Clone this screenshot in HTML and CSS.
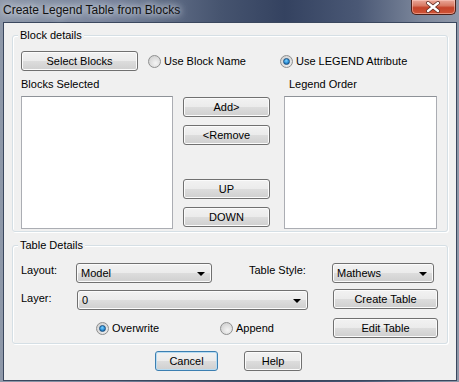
FILE: index.html
```html
<!DOCTYPE html>
<html lang="en">
<head>
    <meta charset="UTF-8">
    <title>Create Legend Table from Blocks</title>
    <link rel="stylesheet" href="styles.css">
</head>
<body>
<div class="window">
    <div class="titlebar">
        <span class="title">Create Legend Table from Blocks</span>
        <span class="close">
            <svg width="43" height="14" viewBox="0 0 43 14">
                <path d="M16 3 L26 11 M26 3 L16 11" stroke="#5a2a22" stroke-width="4" stroke-linecap="round"/>
                <path d="M16 3 L26 11 M26 3 L16 11" stroke="#ffffff" stroke-width="2.4" stroke-linecap="round"/>
            </svg>
        </span>
    </div>
    <div class="client">
        <div class="group group-blocks">
            <span class="group-title">Block details</span>
            <div class="row row-select">
                <button class="btn btn-select">Select Blocks</button>
                <label class="radio radio-name"><span class="dot"></span>Use Block Name</label>
                <label class="radio"><span class="dot checked"></span>Use LEGEND Attribute</label>
            </div>
            <div class="row row-captions">
                <span class="caption-left">Blocks Selected</span>
                <span>Legend Order</span>
            </div>
            <div class="row row-lists">
                <div class="listbox list-left"></div>
                <div class="list-buttons">
                    <button class="btn">Add&gt;</button>
                    <button class="btn btn-remove">&lt;Remove</button>
                    <button class="btn btn-up">UP</button>
                    <button class="btn btn-down">DOWN</button>
                </div>
                <div class="listbox list-right"></div>
            </div>
        </div>

        <div class="group group-table">
            <span class="group-title">Table Details</span>
            <div class="row row-layout">
                <span class="field-label label-layout">Layout:</span>
                <div class="combo combo-layout">Model<span class="arrow"></span></div>
                <span class="field-label label-style">Table Style:</span>
                <div class="combo combo-style">Mathews<span class="arrow"></span></div>
            </div>
            <div class="row row-layer">
                <span class="field-label label-layer">Layer:</span>
                <div class="combo combo-layer">0<span class="arrow"></span></div>
                <button class="btn btn-side">Create Table</button>
            </div>
            <div class="row row-mode">
                <label class="radio radio-overwrite"><span class="dot checked"></span>Overwrite</label>
                <label class="radio radio-append"><span class="dot"></span>Append</label>
                <button class="btn btn-side">Edit Table</button>
            </div>
        </div>

        <div class="footer">
            <button class="btn btn-cancel">Cancel</button>
            <button class="btn btn-help">Help</button>
        </div>
    </div>
</div>
</body>
</html>
```

FILE: styles.css
```css
body {
    margin: 0;
    font-family: "Liberation Sans", Arial, sans-serif;
    font-size: 11px;
    color: #000;
}
.window {
    width: 459px;
    height: 382px;
    box-sizing: border-box;
    padding: 0 2px 2px 3px;
    background: linear-gradient(90deg, #8e98a9 0%, #76829a 25%, #46546f 48%, #344260 62%, #4a5875 78%, #7d889c 92%, #8f97a8 100%);
}
.titlebar {
    display: flex;
    align-items: flex-start;
    height: 22px;
}
.title {
    font-size: 12px;
    line-height: 15px;
    padding-top: 3px;
    color: #111;
    text-shadow: 0 0 6px #e8ecf2, 0 0 10px #dfe4ec;
}
.close {
    margin-left: auto;
    margin-right: 1px;
    width: 45px;
    height: 15px;
    box-sizing: border-box;
    border: 1px solid #4c1f17;
    border-top: none;
    border-radius: 0 0 5px 5px;
    background: linear-gradient(#eaa89a 0%, #d87a64 40%, #c4432a 55%, #cf5436 100%);
    box-shadow: inset 0 0 0 1px rgba(255, 210, 200, 0.5);
}
.close svg {
    display: block;
}
.client {
    height: 357px;
    border: 1px solid #3a475e;
    background: #f0f0f0;
}
.group {
    margin: 12px 8px 0 8px;
    padding: 0 9px 2px 8px;
    border: 1px solid #d5dfe5;
    border-radius: 3px;
    box-shadow: inset 1px 1px 0 #fff, 1px 1px 0 #fff;
}
.group-title {
    display: block;
    width: max-content;
    height: 13px;
    margin: -7px 0 0 -3px;
    padding: 0 2px;
    line-height: 13px;
    background: #f0f0f0;
}
.row {
    display: flex;
}
.btn {
    height: 20px;
    padding: 0;
    box-sizing: border-box;
    border: 1px solid #707070;
    border-radius: 3px;
    background: linear-gradient(#f2f2f2 0%, #ebebeb 50%, #dddddd 50%, #cfcfcf 100%);
    box-shadow: inset 0 0 0 1px #fbfbfb;
    font-family: "Liberation Sans", Arial, sans-serif;
    font-size: 11px;
    font-weight: normal;
    color: #000;
}
.row-select {
    margin-top: 9px;
    height: 20px;
    align-items: center;
}
.btn-select {
    width: 117px;
}
.radio {
    display: flex;
    align-items: center;
    line-height: 13px;
}
.dot {
    position: relative;
    width: 13px;
    height: 13px;
    box-sizing: border-box;
    margin-right: 3px;
    border: 1px solid #8e8f8f;
    border-radius: 50%;
    background: radial-gradient(circle at 60% 65%, #f4f4f4 0%, #dcdcdc 55%, #c9c9c9 100%);
}
.dot.checked::after {
    content: "";
    position: absolute;
    left: 2px;
    top: 2px;
    width: 7px;
    height: 7px;
    box-sizing: border-box;
    border-radius: 50%;
    border: 1px solid #1c5180;
    background: radial-gradient(circle at 45% 35%, #7fd3ff 0%, #2b8ed6 55%, #0f4c8a 100%);
}
.radio-name {
    margin-left: 10px;
    width: 132px;
}
.row-captions {
    margin-top: 7px;
    line-height: 13px;
}
.caption-left {
    width: 268px;
}
.row-lists {
    margin-top: 5px;
}
.listbox {
    height: 133px;
    box-sizing: border-box;
    border: 1px solid #abadb3;
    border-top-color: #8e9298;
    background: #fff;
}
.list-left {
    width: 152px;
}
.list-right {
    width: 153px;
    margin-left: 14px;
}
.list-buttons {
    display: flex;
    flex-direction: column;
    width: 87px;
    margin-left: 10px;
    padding-top: 1px;
}
.btn-remove,
.btn-down {
    margin-top: 8px;
}
.btn-up {
    margin-top: 34px;
}
.group-table {
    margin-top: 13px;
    padding-bottom: 5px;
}
.row-layout {
    margin-top: 11px;
    align-items: flex-start;
}
.field-label {
    line-height: 13px;
    margin-top: 1px;
}
.label-layout {
    width: 55px;
}
.label-style {
    margin-left: 37px;
    width: 83px;
}
.combo {
    position: relative;
    height: 20px;
    box-sizing: border-box;
    padding-left: 4px;
    line-height: 18px;
    border: 1px solid #707070;
    border-radius: 3px;
    background: linear-gradient(#f2f2f2 0%, #ebebeb 50%, #dddddd 50%, #cfcfcf 100%);
    box-shadow: inset 0 0 0 1px #fbfbfb;
}
.arrow {
    position: absolute;
    right: 6px;
    top: 8px;
    width: 0;
    height: 0;
    border-left: 4px solid transparent;
    border-right: 4px solid transparent;
    border-top: 4px solid #000;
}
.combo-layout {
    width: 136px;
}
.combo-style {
    width: 102px;
}
.row-layer {
    margin-top: 6px;
    align-items: flex-start;
}
.label-layer {
    width: 56px;
    margin-top: 3px;
}
.combo-layer {
    width: 231px;
    margin-top: 1px;
}
.btn-side {
    width: 105px;
    margin-left: auto;
}
.row-mode {
    margin-top: 8px;
    height: 20px;
    align-items: center;
}
.radio-overwrite {
    margin-left: 75px;
    width: 124px;
}
.radio-append {
    width: 112px;
}
.footer {
    display: flex;
    margin-top: 7px;
    padding-left: 151px;
}
.btn-cancel {
    width: 63px;
    border-color: #3c7fb1;
    box-shadow: inset 0 0 0 1px #b8dcf2;
}
.btn-help {
    width: 58px;
    margin-left: 26px;
}
```
